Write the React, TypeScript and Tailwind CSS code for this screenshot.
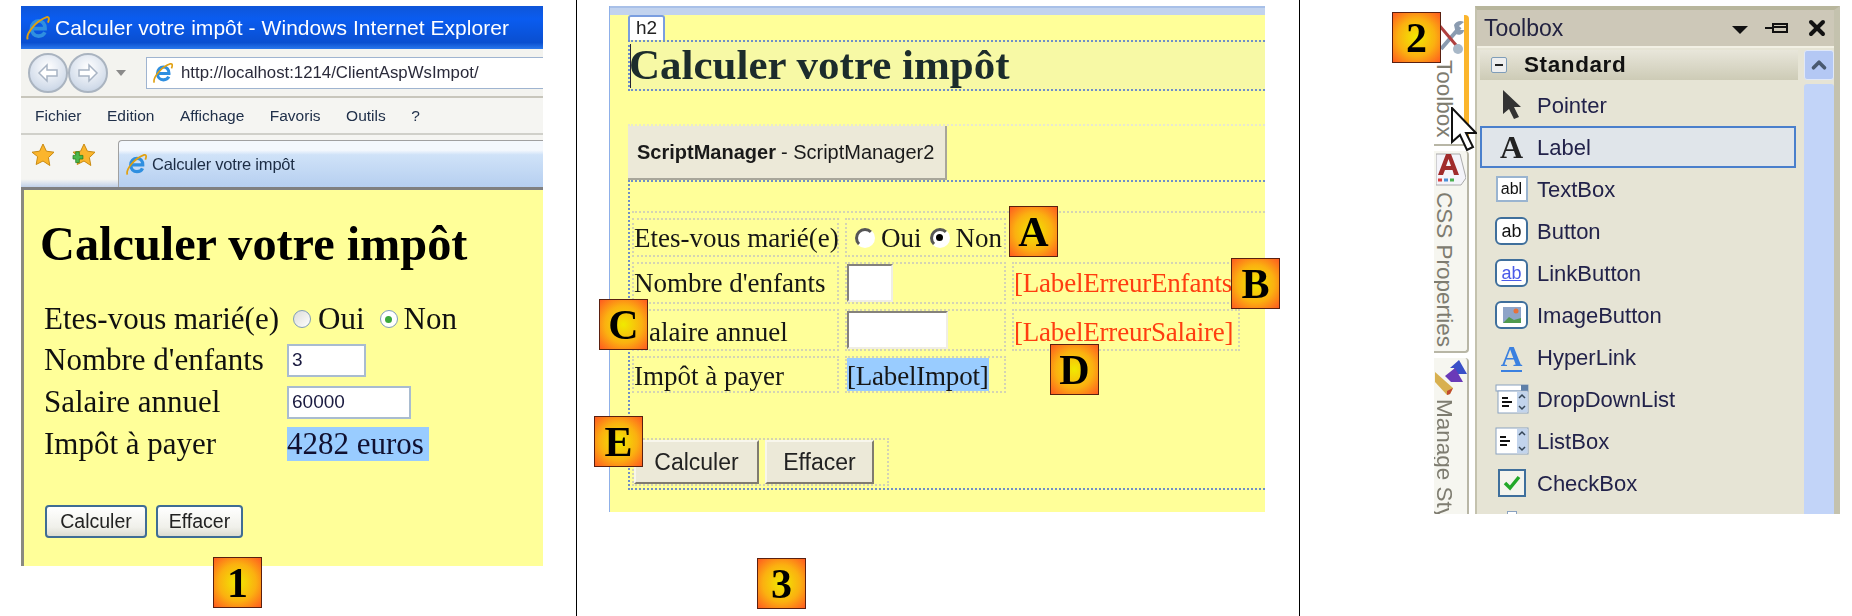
import { ChevronUp, X } from "lucide-react";
import type { ReactNode } from "react";

const ui = "font-['Liberation_Sans',sans-serif]";
const serif = "font-['Liberation_Serif',serif]";

function Badge({ label, className }: { label: string; className: string }) {
  return (
    <div
      className={`absolute flex h-[51px] w-[49px] items-center justify-center border border-[#5a2010] bg-[radial-gradient(circle,#f0ea00_0%,#fbb010_55%,#ff5a20_100%)] text-[42px] font-bold text-black font-['Liberation_Serif',serif] leading-none blur-[0.3px] ${className}`}
    >
      {label}
    </div>
  );
}

function IeLogo({ size }: { size: number }) {
  return (
    <svg width={size} height={size} viewBox="0 0 24 24" className="shrink-0">
      <path d="M6.500 12.500h12c.2-4.500-2.500-7-6-7s-6.500 3-6.500 7 2.800 7 6.500 7c2.800 0 4.800-1.300 5.800-3.500" fill="none" stroke="#2f8fe0" strokeWidth="3.400" />
      <path d="M2.500 22.500C.5 18 9 6 20 2c2.500-.5 2.500 2 1.200 5" fill="none" stroke="#e0a010" strokeWidth="1.800" />
    </svg>
  );
}

function NavButton({ back }: { back?: boolean }) {
  return (
    <div className="flex h-[40px] w-[40px] items-center justify-center rounded-full border-2 border-[#aab4c0] bg-[radial-gradient(circle_at_50%_35%,#ffffff,#d2dcea_70%,#b4c4d8)]">
      <svg width="24" height="22" viewBox="0 0 24 22">
        <path d={back ? "M11 3 3 11l8 8v-5h10V8H11z" : "M13 3l8 8-8 8v-5H3V8h10z"} fill="#fff" stroke="#a8b4c4" strokeWidth="1.500" />
      </svg>
    </div>
  );
}

function Star({ plus }: { plus?: boolean }) {
  return (
    <svg width="24" height="24" viewBox="0 0 24 24">
      <path d="M12 1l3.400 7.200 7.600 1-5.600 5.400 1.400 7.900L12 18l-6.800 3.500 1.400-7.900L1 9.200l7.600-1z" fill="#fbb52c" stroke="#c98a10" strokeWidth="1" />
      {plus && <path d="M3 12h4v4h4v4H7v4H3v-4H0v-4h3z" fill="#4cb84c" stroke="#1d7a1d" strokeWidth=".8" transform="translate(1 -2) scale(.9)" />}
    </svg>
  );
}

function Browser() {
  return (
    <div className="flex w-[522px] flex-col blur-[0.4px]">
      <div className={`flex h-[43px] items-center gap-[4px] bg-[linear-gradient(#0f56d8,#0a5cf0_30%,#0a4fd0_85%,#2a78ec)] pl-[4px] text-[21px] text-white ${ui}`}>
        <IeLogo size={26} />
        <span className="tracking-[0.05px]">Calculer votre impôt - Windows Internet Explorer</span>
      </div>
      <div className="flex h-[49px] items-center border-b-2 border-[#c8c6bc] bg-[#f3f3ef] pl-[7px]">
        <NavButton back />
        <NavButton />
        <div className="ml-[8px] h-0 w-0 border-x-[5px] border-t-[6px] border-x-transparent border-t-[#8a8a8a]" />
        <div className={`ml-[20px] flex h-[32px] flex-1 items-center gap-[7px] border border-r-0 border-[#9fb4d0] bg-white pl-[5px] text-[16.800px] text-[#2a2a3a] ${ui}`}>
          <IeLogo size={22} />
          <span>http://localhost:1214/ClientAspWsImpot/</span>
        </div>
      </div>
      <div className={`flex h-[37px] items-center gap-[25.500px] border-b-2 border-[#d0d0ca] bg-[#f5f5f2] pl-[14px] text-[15.500px] text-[#20304a] ${ui}`}>
        <span>Fichier</span>
        <span>Edition</span>
        <span>Affichage</span>
        <span>Favoris</span>
        <span>Outils</span>
        <span>?</span>
      </div>
      <div className="flex h-[55px] items-end border-b-[3px] border-[#808080] bg-[linear-gradient(#f5f5f2_85%,#c0d0e8)] pl-[10px]">
        <div className="flex h-full w-[87px] items-center gap-[17px] pb-[12px]">
          <Star />
          <Star plus />
        </div>
        <div className={`flex h-[47px] flex-1 items-center gap-[4px] rounded-tl-[4px] border-l border-t border-[#a0a0a0] bg-[linear-gradient(#f4f8fd_20%,#cfe2f8_30%,#b6cff0)] pl-[6px] text-[16.500px] text-[#1c2c44] ${ui}`}>
          <IeLogo size={23} />
          <span className="tracking-[-0.2px]">Calculer votre impôt</span>
        </div>
      </div>
      <div className={`flex h-[376px] flex-col border-l-[3px] border-[#8a8a80] bg-[#ffff99] ${serif}`}>
        <h1 className="ml-[16px] mt-[27px] text-[48.300px] leading-[54px] font-bold text-black">Calculer votre impôt</h1>
        <div className="mt-[28px] ml-[20px] grid grid-cols-[243px_1fr] grid-rows-[40px_42px_42px_42px] items-center text-[31px] leading-[34px] text-[#101010]">
          <span>Etes-vous marié(e)</span>
          <div className="flex items-center">
            <span className="ml-[6px] h-[18px] w-[18px] rounded-full border border-[#7f9db9] bg-[linear-gradient(135deg,#dcdcd8,#ffffff)]" />
            <span className="ml-[7px]">Oui</span>
            <span className="ml-[15px] flex h-[18px] w-[18px] items-center justify-center rounded-full border border-[#7f9db9] bg-white">
              <span className="h-[7px] w-[7px] rounded-full bg-[#3aa83a]" />
            </span>
            <span className="ml-[6px]">Non</span>
          </div>
          <span>Nombre d'enfants</span>
          <div className={`flex h-[33px] w-[79px] items-center border-2 border-[#a9bcd0] bg-white pl-[3px] text-[19px] text-[#1a1a40] ${ui}`}>3</div>
          <span>Salaire annuel</span>
          <div className={`flex h-[33px] w-[124px] items-center border-2 border-[#a9bcd0] bg-white pl-[3px] text-[19px] text-[#1a1a40] ${ui}`}>60000</div>
          <span>Impôt à payer</span>
          <span className="h-[34px] w-[142px] bg-[#99ccff] text-[#101030]">4282 euros</span>
        </div>
        <div className={`ml-[21px] mt-[40px] flex gap-[9px] text-[19.500px] text-[#222] ${ui}`}>
          <button className="h-[33px] w-[102px] rounded-[4px] border-2 border-[#3f6d94] bg-[linear-gradient(#ffffff,#f0f0ea_70%,#dcdcd0)]">Calculer</button>
          <button className="h-[33px] w-[87px] rounded-[4px] border-2 border-[#3f6d94] bg-[linear-gradient(#ffffff,#f0f0ea_70%,#dcdcd0)]">Effacer</button>
        </div>
      </div>
    </div>
  );
}

const cell = "flex items-center whitespace-nowrap border-2 border-dotted border-[#d4d4b4]";

function ClassicRadio({ checked }: { checked?: boolean }) {
  return (
    <span className="flex h-[20px] w-[20px] shrink-0 items-center justify-center rounded-full border-[3px] border-t-[#555] border-l-[#555] border-r-white border-b-white bg-white">
      {checked && <span className="h-[7px] w-[7px] rounded-full bg-black" />}
    </span>
  );
}

function Designer() {
  return (
    <div className="flex h-[506px] w-[656px] flex-col border-l border-[#8fb0e8] bg-[#ffff99] blur-[0.4px]">
      <div className="h-[9px] shrink-0 border-t-2 border-[#a8c0e8] bg-[#c2d3ee]" />
      <div className="flex flex-1 flex-col pl-[18px]">
        <div className={`flex h-[25px] w-[37px] items-center justify-center rounded-t-[3px] border-2 border-b-0 border-[#7a9ee0] bg-white text-[19px] text-[#222] ${ui}`}>h2</div>
        <div className={`flex h-[51px] items-center border-y-2 border-l-2 border-dotted border-[#6f8fc8] bg-[#f7f9a5] text-[43px] font-bold text-[#1c2c2c] ${serif}`}>
          <span className="-mr-[2px] h-[44px] w-[1px] shrink-0 bg-[#223]" />
          Calculer votre impôt
        </div>
        <div className="mt-[33px] flex h-[54px] border-t-2 border-dotted border-[#e8e8d0]">
          <div className={`flex h-[54px] w-[319px] items-center border-r-2 border-b-2 border-[#a8a69a] bg-[#ece9d8] pl-[9px] text-[20px] text-[#1a1a1a] ${ui}`}>
            <b>ScriptManager</b>
            <span className="ml-[5px]">- ScriptManager2</span>
          </div>
        </div>
        <div className={`mt-[2px] flex h-[310px] flex-col border-y-2 border-l-2 border-dotted border-[#6f8fc8] pl-[2px] pt-[29px] ${serif}`}>
          <div className="border-t-2 border-dotted border-[#d4d4b4]" />
          <div className="mt-[5px] grid grid-cols-[207px_161px_228px] gap-x-[6px] gap-y-[5px] text-[27px] leading-[30px] text-[#161616]">
            <div className={`${cell} h-[39px]`}>Etes-vous marié(e)</div>
            <div className={`${cell} h-[39px] pl-[8px]`}>
              <ClassicRadio />
              <span className="ml-[6px]">Oui</span>
              <span className="ml-[8px]"><ClassicRadio checked /></span>
              <span className="ml-[6px]">Non</span>
            </div>
            <div className="h-[39px]" />
            <div className={`${cell} h-[42px]`}>Nombre d'enfants</div>
            <div className={`${cell} h-[42px]`}>
              <div className="h-[38px] w-[46px] border-2 border-t-[#85827a] border-l-[#85827a] border-r-[#f0eee4] border-b-[#f0eee4] bg-white" />
            </div>
            <div className={`${cell} h-[42px] tracking-[-0.2px] text-[#ff3d10]`}>[LabelErreurEnfants]</div>
            <div className={`${cell} h-[42px] pt-[4px]`}>Salaire annuel</div>
            <div className={`${cell} h-[42px]`}>
              <div className="h-[38px] w-[101px] border-2 border-t-[#85827a] border-l-[#85827a] border-r-[#f0eee4] border-b-[#f0eee4] bg-white" />
            </div>
            <div className={`${cell} h-[42px] pt-[4px] tracking-[-0.2px] text-[#ff3d10]`}>[LabelErreurSalaire]</div>
            <div className={`${cell} h-[37px] pt-[3px]`}>Impôt à payer</div>
            <div className={`${cell} h-[37px]`}>
              <span className="flex h-[33px] items-end bg-[#99ccff] tracking-[-0.2px]">[LabelImpot]</span>
            </div>
          </div>
          <div className={`mt-[45px] flex h-[48px] w-[257px] gap-[6px] border-2 border-dotted border-[#d4d4b4] text-[23px] text-[#222] ${ui}`}>
            <button className="h-full w-[125px] border-2 border-t-[#f8f6ec] border-l-[#f8f6ec] border-r-[#807c70] border-b-[#807c70] bg-[#ece9d8]">Calculer</button>
            <button className="h-full w-[109px] border-2 border-t-[#f8f6ec] border-l-[#f8f6ec] border-r-[#807c70] border-b-[#807c70] bg-[#ece9d8]">Effacer</button>
          </div>
        </div>
      </div>
    </div>
  );
}

function BoxIcon({ text, link }: { text: string; link?: boolean }) {
  return (
    <span className={`flex h-[28px] w-[33px] items-center justify-center rounded-[6px] border-2 border-[#3f6f9c] bg-white text-[18px] ${link ? "text-[#4a5ae8] underline" : "text-[#111]"}`}>
      {text}
    </span>
  );
}

function ListIcon({ drop }: { drop?: boolean }) {
  return (
    <svg width="34" height="30" viewBox="0 0 34 30">
      {drop && <rect x="1" y="1" width="32" height="6" fill="#fff" stroke="#8aa2c0" />}
      {drop && <rect x="26" y="1" width="7" height="6" fill="#5f80a8" />}
      <rect x={drop ? 3 : 1} y={drop ? 7 : 2} width={drop ? 30 : 32} height={drop ? 22 : 26} fill="#fff" stroke="#8aa2c0" />
      <rect x="22" y={drop ? 8 : 3} width="10" height={drop ? 20 : 24} fill="#c2d4ec" />
      <path d={drop ? "M7 14h6M7 18h10M7 22h7" : "M5 11h6M5 15h10M5 19h7"} stroke="#111" strokeWidth="1.800" />
      <path d={drop ? "M24 14l3-3 3 3M24 22l3 3 3-3" : "M24 9l3-3 3 3M24 21l3 3 3-3"} fill="none" stroke="#345" strokeWidth="1.500" />
    </svg>
  );
}

const tools: { name: string; icon: ReactNode; active?: boolean }[] = [
  {
    name: "Pointer",
    icon: (
      <svg width="22" height="32" viewBox="0 0 22 32">
        <path d="M2 1v24l6-5 5 10 5-2-5-10h7z" fill="#333" />
      </svg>
    ),
  },
  { name: "Label", active: true, icon: <span className={`text-[32px] font-bold leading-none text-[#222] ${serif}`}>A</span> },
  {
    name: "TextBox",
    icon: <span className="flex h-[26px] w-[32px] items-center justify-center border-2 border-[#9ab4d0] bg-white text-[16px] text-[#111]">abl</span>,
  },
  { name: "Button", icon: <BoxIcon text="ab" /> },
  { name: "LinkButton", icon: <BoxIcon text="ab" link /> },
  {
    name: "ImageButton",
    icon: (
      <span className="flex h-[28px] w-[33px] items-center justify-center rounded-[6px] border-2 border-[#3f6f9c] bg-white">
        <svg width="18" height="16" viewBox="0 0 18 16">
          <rect width="18" height="16" fill="#8ea4c8" />
          <path d="M0 16l6-6 5 3 7-2v5z" fill="#4f9a4f" />
          <circle cx="13" cy="4" r="2.500" fill="#e8703a" />
        </svg>
      </span>
    ),
  },
  {
    name: "HyperLink",
    icon: <span className={`border-b-2 border-[#3a80e0] text-[30px] font-bold leading-[28px] text-[#3a80e0] ${serif}`}>A</span>,
  },
  { name: "DropDownList", icon: <ListIcon drop /> },
  { name: "ListBox", icon: <ListIcon /> },
  {
    name: "CheckBox",
    icon: (
      <svg width="28" height="28" viewBox="0 0 28 28">
        <rect x="1" y="1" width="26" height="26" fill="#f4f4ee" stroke="#3f6f9c" strokeWidth="2" />
        <path d="M7 14l5 5 9-11" fill="none" stroke="#22a82a" strokeWidth="3.500" />
      </svg>
    ),
  },
  { name: "", icon: <span className="h-[28px] w-[10px] border border-[#8aa2c0] bg-white" /> },
];

function SideTab({ label, icon, active, className }: { label: string; icon: ReactNode; active?: boolean; className: string }) {
  return (
    <div className={`flex w-[35px] flex-col items-start overflow-hidden rounded-r-[4px] border-b-2 border-r-2 ${active ? "border-r-[5px] border-r-[#fbb52c] border-b-[#b8b6a6] bg-white" : "border-[#b8b6a6] bg-[#f6f6f0]"} ${className}`}>
      <div className="flex h-[38px] w-[33px] shrink-0 items-center justify-center">{icon}</div>
      <span className={`mt-[3px] whitespace-nowrap text-[22.500px] leading-[20px] text-[#7e7c70] [writing-mode:vertical-rl] ${ui}`}>{label}</span>
    </div>
  );
}

function Toolbox() {
  return (
    <div className="flex items-start gap-[6px]">
      <div className="flex h-[508px] w-[35px] flex-col gap-[5px] overflow-hidden pt-[9px] blur-[0.4px]">
        <SideTab
          active
          label="Toolbox"
          className="h-[131px] shrink-0 pt-[4px]"
          icon={
            <svg width="30" height="38" viewBox="0 0 30 38" fill="none">
              <path d="M5 30 24 8" stroke="#8a9bb0" strokeWidth="4" />
              <path d="M18 6c2-4 7-5 10-3l-5 4 1 4 4 0c0 4-5 6-8 4z" fill="#8a9bb0" />
              <path d="M3 6l22 26" stroke="#b04040" strokeWidth="3" />
              <circle cx="22" cy="30" r="5" fill="#a8b8c8" />
            </svg>
          }
        />
        <SideTab
          label="CSS Properties"
          className="h-[202px] shrink-0"
          icon={
            <svg width="30" height="34" viewBox="0 0 30 34">
              <path d="M0 1h24l6 24-5 7H0z" fill="#f4f4fa" stroke="#aaa" />
              <path d="M2 22 10 1h5l8 21h-5l-1.500-5H9l-2 5zM10 13h5l-2.500-7z" fill="#a02c2c" fillRule="evenodd" />
              <path d="M2 27h4" stroke="#d84040" strokeWidth="3" />
              <path d="M8 27h4" stroke="#4a90d8" strokeWidth="3" />
              <path d="M14 27h4" stroke="#4ab050" strokeWidth="3" />
            </svg>
          }
        />
        <SideTab
          label="Manage Styles"
          className="h-[160px] shrink-0 rounded-b-none border-b-0"
          icon={
            <svg width="32" height="38" viewBox="0 0 32 38">
              <path d="M15 10 24 2l8 14H22l-3-6z" fill="#3a50c8" />
              <path d="M10 18l10-8 8 14H16z" fill="#6a3ab8" />
              <path d="M0 14l18 16-3 6-3 1L0 24z" fill="#d8b050" />
              <path d="M12 33l6-3-3 6-3 1z" fill="#c04a30" />
            </svg>
          }
        />
      </div>
      <div className="flex h-[508px] w-[365px] flex-col overflow-hidden border-t-4 border-r-[6px] border-l-2 border-t-[#b8b69c] border-r-[#c4c2ae] border-l-[#c4c2ae] bg-[#e6e4d5] blur-[0.4px]">
        <div className={`flex h-[36px] shrink-0 items-center bg-[#cdc8b8] pl-[7px] text-[23px] text-[#222240] ${ui}`}>
          <span className="flex-1">Toolbox</span>
          <span className="mr-[17px] mt-[3px] h-0 w-0 border-x-[8px] border-t-[8px] border-x-transparent border-t-[#111]" />
          <svg width="24" height="14" viewBox="0 0 24 14" className="mr-[16px]">
            <path d="M0 7h8M8 2v10M8 3h14v3H8M8 6h14v5H8" fill="none" stroke="#111" strokeWidth="2" />
          </svg>
          <X size={24} strokeWidth={4} className="mr-[5px] text-[#111]" />
        </div>
        <div className="flex min-h-0 flex-1 border-t-2 border-[#f2f0e4]">
          <div className={`min-w-0 flex-1 overflow-hidden pl-[3px] pt-[2px] text-[22px] text-[#22224a] ${ui}`}>
            <div className="mr-[6px] flex h-[30px] items-center bg-[linear-gradient(#e8e6da,#cdcbb6)] pl-[11px]">
              <span className="flex h-[16px] w-[16px] items-center justify-center rounded-[2px] border border-[#7f9db9] bg-[#eeeeee]">
                <span className="h-[2px] w-[8px] bg-[#222]" />
              </span>
              <b className="ml-[17px] text-[22.500px] tracking-[0.6px] text-[#111]">Standard</b>
            </div>
            <div className="mt-[4px]">
              {tools.map((tool) => (
                <div key={tool.name} className={`mr-[8px] flex h-[42px] items-center ${tool.active ? "border-2 border-[#4a7fcc] bg-[#e0e5ea]" : ""}`}>
                  <span className={`flex w-[51px] shrink-0 items-center justify-center ${tool.active ? "ml-[4px]" : "ml-[6px]"}`}>{tool.icon}</span>
                  {tool.name}
                </div>
              ))}
            </div>
          </div>
          <div className="flex w-[30px] shrink-0 flex-col gap-[4px] pt-[2px]">
            <div className="flex h-[30px] items-center justify-center rounded-[3px] border border-[#e0e8f8] bg-[#b4c8f4]">
              <ChevronUp size={22} strokeWidth={4} className="text-[#4a5a70]" />
            </div>
            <div className="flex-1 rounded-t-[3px] bg-[#c2d4f8]" />
          </div>
        </div>
      </div>
    </div>
  );
}

export default function App() {
  return (
    <div className="relative flex h-[616px] w-[1852px] overflow-hidden bg-white">
      <div className="h-full w-[577px] shrink-0 border-r border-black pl-[21px] pt-[6px]">
        <Browser />
      </div>
      <div className="h-full w-[723px] shrink-0 border-r border-black pl-[32px] pt-[6px]">
        <Designer />
      </div>
      <div className="h-full flex-1 pl-[134px] pt-[6px]">
        <Toolbox />
      </div>
      <Badge label="1" className="left-[213px] top-[557px]" />
      <Badge label="3" className="left-[757px] top-[558px]" />
      <Badge label="2" className="left-[1392px] top-[12px]" />
      <Badge label="A" className="left-[1009px] top-[206px]" />
      <Badge label="B" className="left-[1231px] top-[258px]" />
      <Badge label="C" className="left-[599px] top-[299px]" />
      <Badge label="D" className="left-[1050px] top-[344px]" />
      <Badge label="E" className="left-[594px] top-[416px]" />
      {/* mouse cursor over the toolbox tab */}
      <svg width="26" height="44" viewBox="0 0 26 44" className="absolute left-[1451px] top-[107px]">
        <path d="M1 1v34l8-7 7 15 6-3-7-14h10z" fill="#fff" stroke="#111" strokeWidth="2" />
      </svg>
    </div>
  );
}
